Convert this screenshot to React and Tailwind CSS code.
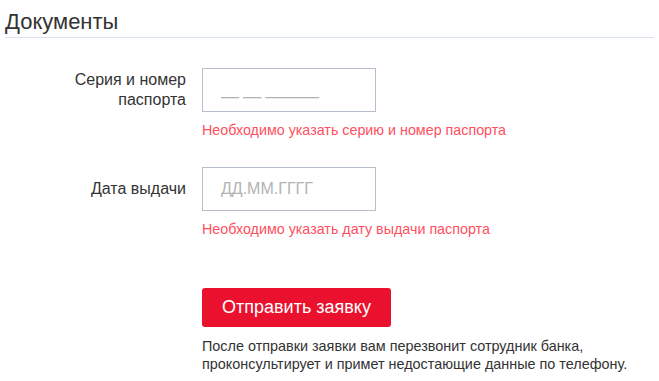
import React from 'react';

const fields = [
    { id: 'passport', label: ['Серия и номер', 'паспорта'], placeholder: '__ __ ______', error: 'Необходимо указать серию и номер паспорта' },
    { id: 'date', label: ['Дата выдачи'], placeholder: 'ДД.ММ.ГГГГ', error: 'Необходимо указать дату выдачи паспорта' },
];

export default function App() {
    return (
        <div className="min-h-[381px] bg-white text-[#333] font-['Liberation_Sans',Arial,sans-serif]">
            <div className="mx-[5px] border-b border-[#d6e0ee] pt-[9px] pb-[2px]">
                <h2 className="text-[22px] leading-[26px] font-normal">Документы</h2>
            </div>

            <div className="pt-[30px]">
                {fields.map((field) => (
                    <div key={field.id} className="mb-[27px]">
                        <div className="flex items-center">
                            <label className="ml-[46px] w-[140px] text-right text-[16px] leading-[20px]">
                                {field.label.map((line) => (
                                    <span key={line} className="block">{line}</span>
                                ))}
                            </label>
                            <input
                                className="ml-[16px] h-[44px] w-[174px] border border-[#b6bdcd] bg-white pl-[18px] text-[16px] text-[#333] outline-none placeholder:text-[#b3b3b3]"
                                placeholder={field.placeholder}
                            />
                        </div>
                        <p className="ml-[202px] mt-[8px] text-[14.3px] leading-[20px] text-[#ff4f5e]">{field.error}</p>
                    </div>
                ))}
            </div>

            <div className="ml-[202px] pt-[22px]">
                <button className="h-[39px] w-[189px] rounded-[3px] bg-[#ea112e] text-[18px] text-white">
                    Отправить заявку
                </button>
                <p className="mt-[10px] text-[14.4px] leading-[18px] text-[#333]">
                    После отправки заявки вам перезвонит сотрудник банка,<br />
                    проконсультирует и примет недостающие данные по телефону.
                </p>
            </div>
        </div>
    );
}
